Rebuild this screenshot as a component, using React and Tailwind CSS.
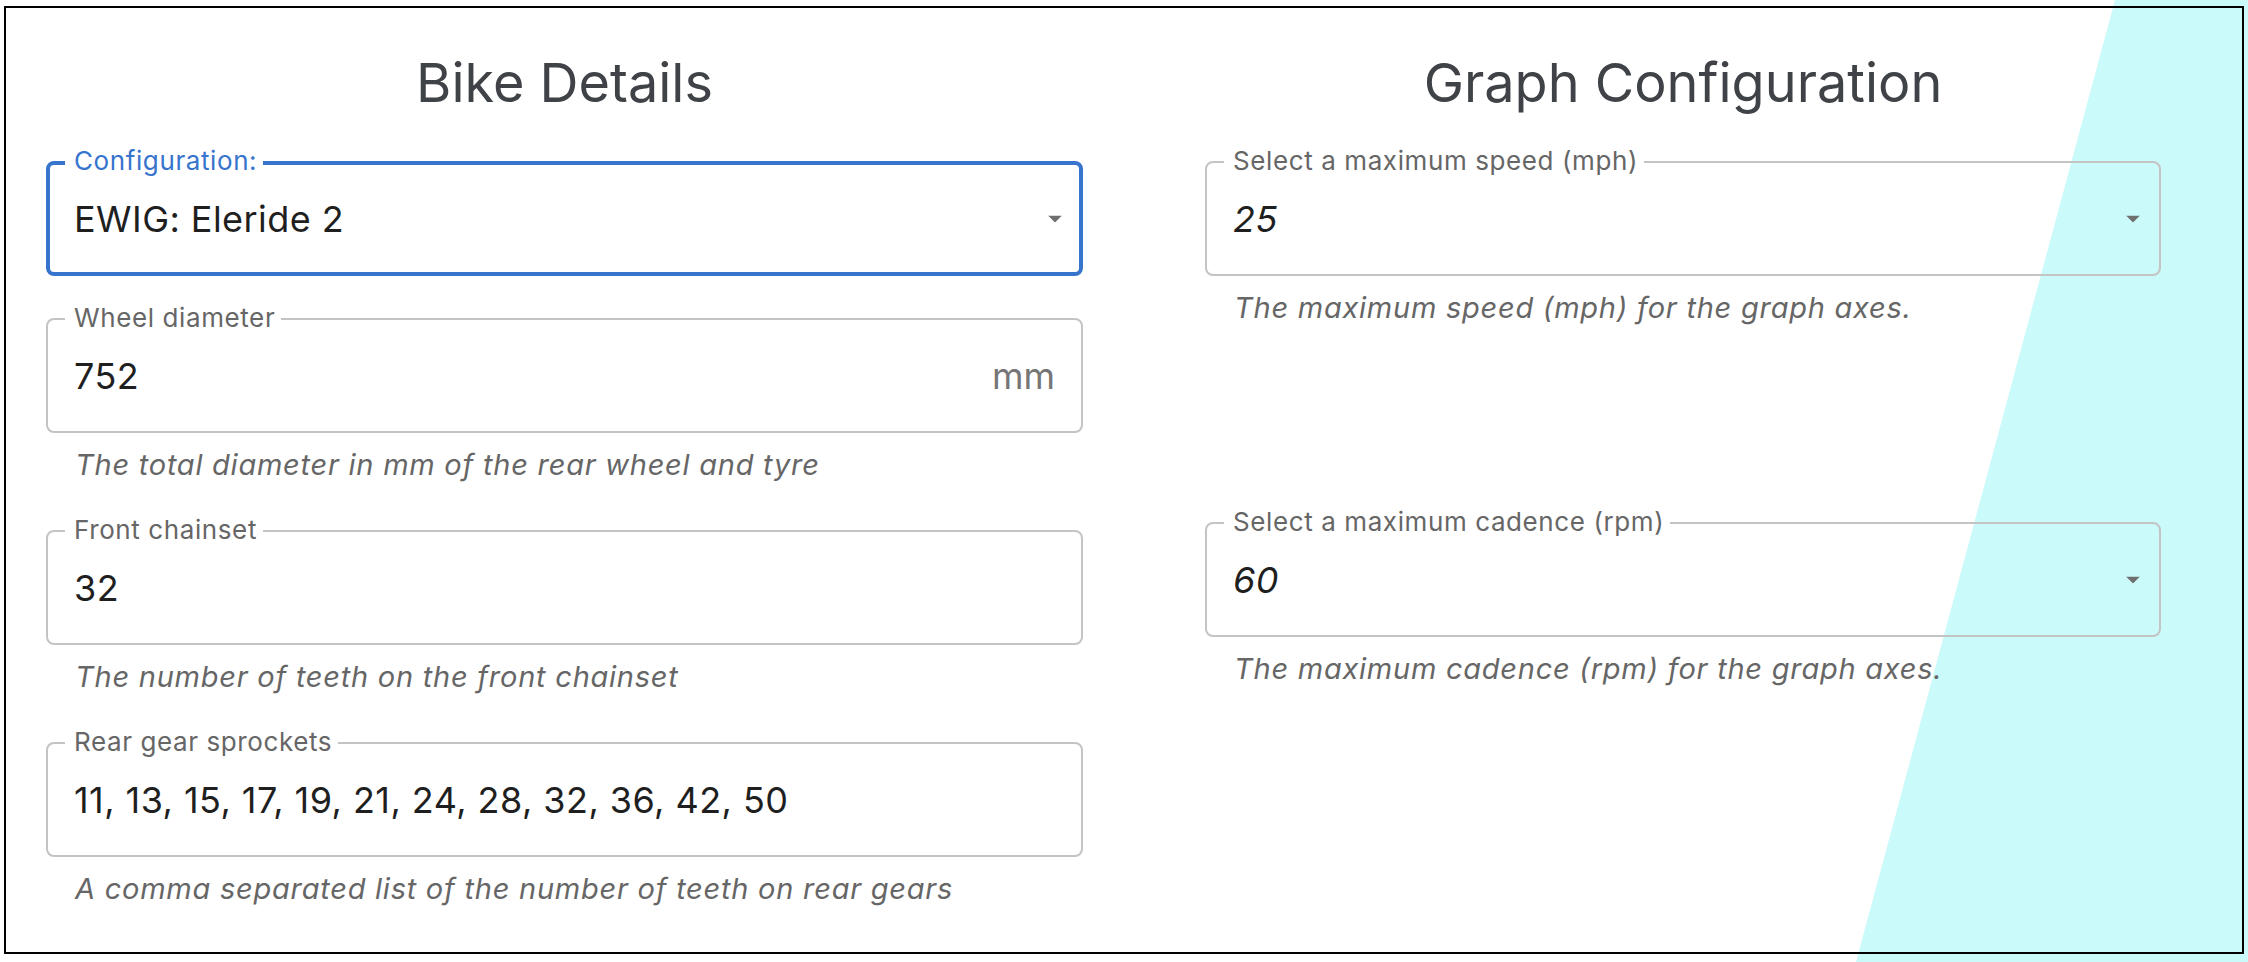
const LEFT_FIELDS = [
  { label: 'Wheel diameter', value: '752', suffix: 'mm', help: 'The total diameter in mm of the rear wheel and tyre' },
  { label: 'Front chainset', value: '32', help: 'The number of teeth on the front chainset' },
  { label: 'Rear gear sprockets', value: '11, 13, 15, 17, 19, 21, 24, 28, 32, 36, 42, 50', help: 'A comma separated list of the number of teeth on rear gears' },
];

function DropArrow({ focused }) {
  return (
    <svg
      width="14"
      height="7"
      viewBox="0 0 14 7"
      className={`absolute top-1/2 -translate-y-1/2 ${focused ? 'right-[17px]' : 'right-[19px]'}`}
    >
      <polygon points="0,0 14,0 7,7" fill="#6f6f6f" />
    </svg>
  );
}

function Field({ label, value, suffix, select, italic, focused }) {
  return (
    <div
      className={`relative h-[115px] rounded-[8px] flex items-center ${
        focused ? 'border-4 border-[#3774cd] px-[24px]' : 'border-2 border-[#c4c4c4] px-[26px]'
      }`}
    >
      <span
        className={`absolute bg-white pl-[9px] pr-[6px] text-[26px] leading-[26px] tracking-[0.6px] whitespace-nowrap ${
          focused ? 'top-[-17px] left-[15px] text-[#3774cd]' : 'top-[-15px] left-[17px] text-[#666666]'
        }`}
      >
        {label}
      </span>
      <span className={`flex-1 text-[36px] tracking-[0.45px] text-[#1f1f1f] whitespace-nowrap ${italic ? 'italic' : ''}`}>
        {value}
      </span>
      {suffix && <span className="text-[36px] text-[#767676]">{suffix}</span>}
      {select && <DropArrow focused={focused} />}
    </div>
  );
}

function Help({ children }) {
  return (
    <p className="mt-[12px] ml-[29px] text-[29px] leading-[40px] italic tracking-[0.75px] text-[#666666] whitespace-nowrap">
      {children}
    </p>
  );
}

function Title({ children }) {
  return <h2 className="text-center text-[54px] leading-[64px] text-[#3f4246]">{children}</h2>;
}

export default function App() {
  return (
    <div className="relative w-[2248px] h-[962px] overflow-hidden bg-white pl-[4px] pt-[6px] font-['Inter',sans-serif]">
      {/* decorative cyan wedge behind the panel */}
      <div className="absolute inset-0 bg-[#cbfafa] [clip-path:polygon(2115px_0,100%_0,100%_100%,1856px_100%)]" />

      <div className="relative w-[2240px] h-[948px] border-2 border-black flex pl-[40px] pt-[43px]">
        {/* Bike details */}
        <div className="w-[1037px] flex flex-col">
          <Title>Bike Details</Title>
          <div className="mt-[46px]">
            <Field label="Configuration:" value="EWIG: Eleride 2" select focused />
          </div>
          {LEFT_FIELDS.map((f, i) => (
            <div key={f.label} className={i === 0 ? 'mt-[42px]' : 'mt-[45px]'}>
              <Field label={f.label} value={f.value} suffix={f.suffix} />
              <Help>{f.help}</Help>
            </div>
          ))}
        </div>

        {/* Graph configuration */}
        <div className="ml-[122px] w-[956px] flex flex-col">
          <Title>Graph Configuration</Title>
          <div className="mt-[46px]">
            <Field label="Select a maximum speed (mph)" value="25" select italic />
            <Help>The maximum speed (mph) for the graph axes.</Help>
          </div>
          <div className="mt-[194px]">
            <Field label="Select a maximum cadence (rpm)" value="60" select italic />
            <Help>The maximum cadence (rpm) for the graph axes.</Help>
          </div>
        </div>
      </div>
    </div>
  );
}
